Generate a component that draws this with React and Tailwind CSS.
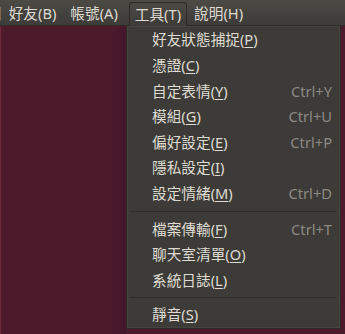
import React from "react";

const font = { fontFamily: '"Noto Sans", "Noto Sans CJK TC", sans-serif' };

function Label({ text, m }) {
  return (
    <span>
      {text}(<span className="underline underline-offset-[2px] decoration-[1px]">{m}</span>)
    </span>
  );
}

const group1 = [
  ["好友狀態捕捉", "P", ""],
  ["憑證", "C", ""],
  ["自定表情", "Y", "Ctrl+Y"],
  ["模組", "G", "Ctrl+U"],
  ["偏好設定", "E", "Ctrl+P"],
  ["隱私設定", "I", ""],
  ["設定情緒", "M", "Ctrl+D"],
];
const group2 = [
  ["檔案傳輸", "F", "Ctrl+T"],
  ["聊天室清單", "O", ""],
  ["系統日誌", "L", ""],
];
const group3 = [["靜音", "S", ""]];

function Row({ item }) {
  return (
    <div className="h-[25.6px] flex items-center justify-between pl-[25px] pr-[8px]">
      <Label text={item[0]} m={item[1]} />
      {item[2] && <span className="text-[#8c8a84]">{item[2]}</span>}
    </div>
  );
}

export default function App() {
  return (
    <div
      className="relative w-[345px] h-[334px] overflow-hidden bg-[#4c1a2b] text-[14.67px] text-[#dfdbd2] leading-none"
      style={font}
    >
      {/* menubar */}
      <div className="h-[26px] flex items-stretch bg-gradient-to-b from-[#4b4a45] to-[#3d3c38] border-b border-[#2e2d2a] pl-[4px] pt-[2px]">
        <div className="flex items-center ml-[-17px] text-[#9a978f]">開</div>
        <div className="flex items-center px-[7px]">好友(B)</div>
        <div className="flex items-center px-[7px]">帳號(A)</div>
        <div className="flex items-center px-[5px] ml-[4px] border border-b-0 border-[#2b2a27] rounded-t-[3px] bg-gradient-to-b from-[#4a4944] to-[#3c3b37] relative z-10 mb-[-1px]">
          工具(T)
        </div>
        <div className="flex items-center px-[7px]">說明(H)</div>
      </div>

      {/* left area */}
      <div className="absolute left-0 top-[27px] bottom-0 w-[1px] bg-[#6e2a3a]" />
      <div className="absolute left-[112px] top-[27px] bottom-0 w-[14px] bg-gradient-to-r from-[#4c1a2b] to-[#44172a]" />

      {/* dropdown */}
      <div className="absolute left-[126px] top-[25px] w-[215px] bg-[#3c3b37] border border-[#2b2a27] shadow-[inset_0_0_0_1px_#45443f]">
        <div className="pt-[1px]">
          {group1.map((it) => (
            <Row key={it[0]} item={it} />
          ))}
          <div className="h-[10px] flex items-center px-[3px]">
            <div className="h-[1px] w-full bg-[#302f2c]" />
          </div>
          {group2.map((it) => (
            <Row key={it[0]} item={it} />
          ))}
          <div className="h-[9px] flex items-center px-[3px]">
            <div className="h-[1px] w-full bg-[#302f2c]" />
          </div>
          {group3.map((it) => (
            <Row key={it[0]} item={it} />
          ))}
        </div>
      </div>
    </div>
  );
}
